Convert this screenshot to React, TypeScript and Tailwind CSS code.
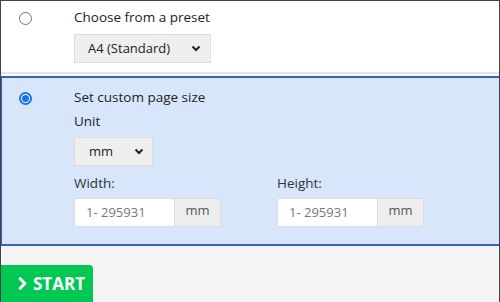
import { ChevronRight } from "lucide-react";

function Chevron() {
  return (
    <svg width="10" height="7" viewBox="0 0 10 7" className="shrink-0">
      <path d="M1.5 1.5 L5 5 L8.5 1.5" fill="none" stroke="#222" strokeWidth="2" />
    </svg>
  );
}

function Radio({ checked }: { checked?: boolean }) {
  return checked ? (
    <div className="w-[13px] h-[13px] shrink-0 rounded-full border-2 border-[#1a73e8] bg-white flex items-center justify-center">
      <div className="w-[7px] h-[7px] rounded-full bg-[#1a73e8]" />
    </div>
  ) : (
    <div className="w-[13px] h-[13px] shrink-0 rounded-full border border-[#767676] bg-white" />
  );
}

function SizeInput({ label }: { label: string }) {
  return (
    <div className="flex flex-col">
      <span className="text-[13.5px] text-[#333] leading-[18px] mb-[6px]">{label}</span>
      <div className="flex h-[29px]">
        <div className="w-[100px] bg-white border border-[#ddd] border-r-0 flex items-center pl-[11px] text-[13px] text-[#777]">
          1- 295931
        </div>
        <div className="w-[47px] bg-[#eee] border border-[#ddd] flex items-center justify-center text-[13px] text-[#555] pb-[3px]">
          mm
        </div>
      </div>
    </div>
  );
}

export default function App() {
  return (
    <div
      className="w-[500px] h-[302px] border border-[#444] border-b-0 bg-[#f4f4f4] flex flex-col overflow-hidden"
      style={{ fontFamily: '"Open Sans", sans-serif' }}
    >
      <div className="bg-white h-[73px] flex border-b-2 border-[#e6e6e6]">
        <div className="w-[73px] pl-[18px] pt-[11px]">
          <Radio />
        </div>
        <div className="flex flex-col pt-[7px]">
          <span className="text-[13.5px] text-[#222] leading-[18px]">Choose from a preset</span>
          <div className="mt-[8px] w-[137px] h-[29px] bg-[#efefef] border border-[#ddd] flex items-center justify-between pl-[13px] pr-[9px] text-[13px] text-[#222]">
            A4 (Standard)
            <Chevron />
          </div>
        </div>
      </div>
      <div className="h-[2px] bg-white" />
      <div className="bg-[#d7e6fb] h-[170px] border-t-2 border-b-2 border-l border-[#3563ad] flex">
        <div className="w-[72px] pl-[17px] pt-[14px]">
          <Radio checked />
        </div>
        <div className="flex flex-col pt-[10px]">
          <span className="text-[13.5px] text-[#222] leading-[18px]">Set custom page size</span>
          <span className="text-[13.5px] text-[#222] leading-[18px] mt-[6px]">Unit</span>
          <div className="mt-[7px] w-[79px] h-[29px] bg-[#efefef] border border-[#ddd] flex items-center justify-between pl-[14px] pr-[8px] text-[13px] text-[#222]">
            mm
            <Chevron />
          </div>
          <div className="flex gap-[56px] mt-[8px]">
            <SizeInput label="Width:" />
            <SizeInput label="Height:" />
          </div>
        </div>
      </div>
      <div className="flex-1 flex items-end">
        <button className="w-[92px] h-[37px] bg-[#00c853] rounded-tr-[4px] text-white font-bold text-[17px] flex items-center pl-[12px] gap-[1px]">
          <ChevronRight size={19} strokeWidth={4} />
          START
        </button>
      </div>
    </div>
  );
}
